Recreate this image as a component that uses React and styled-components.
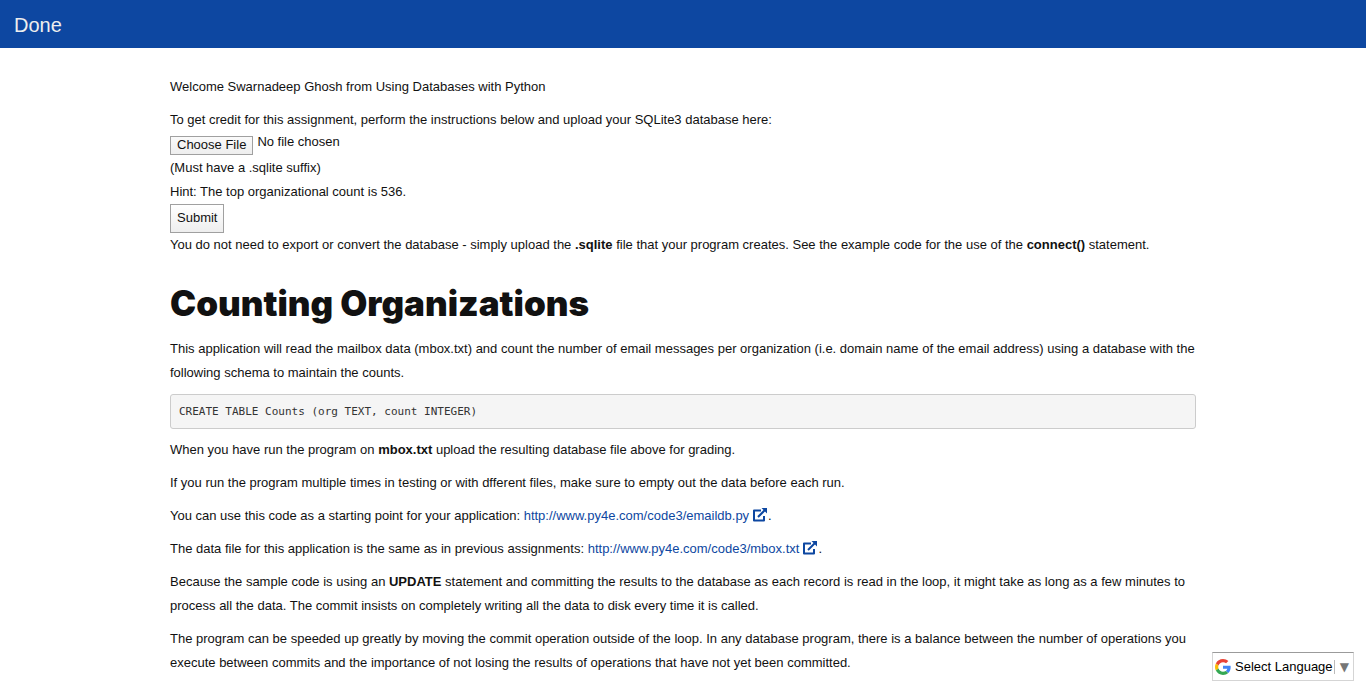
import React from "react";
import styled, { createGlobalStyle } from "styled-components";

const GlobalStyle = createGlobalStyle`
  *, *::before, *::after { box-sizing: border-box; }
  body {
    margin: 0;
    background: #fff;
    color: #111;
    font: 13px/24px "Liberation Sans", Arial, sans-serif;
  }
`;

const TopBar = styled.nav`
  display: flex;
  align-items: center;
  height: 48px;
  padding: 2px 14px 0;
  background: #0d47a1;
`;

const DoneLink = styled.a`
  color: #eee;
  font-size: 20px;
  text-decoration: none;
`;

const Content = styled.main`
  max-width: 1066px;
  margin: 0 auto;
  padding: 27px 20px 0;
`;

const Paragraph = styled.p`
  margin: 0 0 9px;
`;

const Form = styled.form`
  display: flex;
  flex-direction: column;
  align-items: flex-start;
`;

const FileInput = styled.input`
  display: block;
  height: 24px;
  color: inherit;
  font: inherit;
  line-height: 20px;

  &::file-selector-button {
    height: 19px;
    margin: 1px 4px 0 0;
    padding: 0 6px;
    border: 1px solid #a0a0a0;
    border-radius: 0;
    background: linear-gradient(#fafafa, #eee);
    color: #111;
    font: 13px/16px "Liberation Sans", Arial, sans-serif;
    vertical-align: -3px;
  }
`;

const SubmitButton = styled.button`
  height: 29px;
  padding: 0 6px 2px;
  border: 1px solid #a0a0a0;
  background: linear-gradient(#fff, #eee);
  color: #111;
  font: inherit;
`;

const Title = styled.h1`
  margin: 22px 0 10px;
  color: #111;
  font: 900 35px/48px "Arial Black", Inter, sans-serif;
`;

const CodeBlock = styled.pre`
  margin: 0 0 9px;
  padding: 8px;
  border: 1px solid #ccc;
  border-radius: 3px;
  background: #f5f5f5;
  color: #333;
  font: 11px/17px Consolas, "DejaVu Sans Mono", monospace;
`;

const ExternalLink = styled.a`
  color: #0d47a1;
  text-decoration: none;

  svg {
    margin-left: 3px;
    vertical-align: -2px;
  }
`;

const LanguagePicker = styled.label`
  position: fixed;
  right: 12px;
  bottom: 3px;
  display: flex;
  align-items: center;
  width: 142px;
  height: 29px;
  padding: 0 4px 0 2px;
  border: 1px solid #d5d5d5;
  border-top-color: #9b9b9b;
  background: #fff;
`;

const LanguageSelect = styled.select`
  flex: 1;
  min-width: 0;
  height: 24px;
  margin-left: 4px;
  padding: 0;
  border: 0;
  appearance: none;
  background: transparent;
  color: #000;
  font: inherit;
`;

const Arrow = styled.span`
  padding-left: 5px;
  border-left: 1px solid #bbb;
  color: #767676;
  font: 12px/14px "DejaVu Sans", sans-serif;
`;

function ExternalIcon() {
  return (
    <svg width="16" height="14" viewBox="0 0 16 14" fill="none" stroke="#0d47a1" aria-hidden="true">
      <path d="M9 2.500H2V12.500H12V8" strokeWidth="2" strokeLinejoin="round" />
      <path d="M6 9l7-7" strokeWidth="2" />
      <path d="M9.500 0H15v5.500z" fill="#0d47a1" stroke="none" />
    </svg>
  );
}

function GoogleIcon() {
  return (
    <svg width="16" height="16" viewBox="0 0 48 48" aria-hidden="true">
      <path fill="#EA4335" d="M24 9.500c3.540 0 6.710 1.220 9.210 3.600l6.850-6.850C35.900 2.380 30.470 0 24 0 14.620 0 6.510 5.380 2.560 13.220l7.980 6.190C12.430 13.720 17.740 9.500 24 9.500z" />
      <path fill="#4285F4" d="M46.980 24.550c0-1.570-.15-3.090-.38-4.550H24v9.020h12.940c-.58 2.960-2.260 5.480-4.780 7.180l7.730 6c4.510-4.180 7.090-10.360 7.090-17.650z" />
      <path fill="#FBBC05" d="M10.530 28.590c-.48-1.450-.76-2.990-.76-4.590s.27-3.140.76-4.590l-7.980-6.190C.92 16.460 0 20.120 0 24c0 3.880.92 7.540 2.560 10.780l7.970-6.190z" />
      <path fill="#34A853" d="M24 48c6.480 0 11.930-2.130 15.890-5.810l-7.730-6c-2.150 1.450-4.920 2.300-8.160 2.300-6.260 0-11.570-4.220-13.470-9.910l-7.980 6.190C6.510 42.620 14.620 48 24 48z" />
    </svg>
  );
}

export default function App() {
  return (
    <>
      <GlobalStyle />
      <TopBar>
        <DoneLink href="#done">Done</DoneLink>
      </TopBar>
      <Content>
        <Paragraph>Welcome Swarnadeep Ghosh from Using Databases with Python</Paragraph>
        <Form onSubmit={(event) => event.preventDefault()}>
          <label htmlFor="database">
            To get credit for this assignment, perform the instructions below and upload your SQLite3 database here:
          </label>
          <FileInput id="database" type="file" name="database" />
          <span>(Must have a .sqlite suffix)</span>
          <span>Hint: The top organizational count is 536.</span>
          <SubmitButton type="submit">Submit</SubmitButton>
        </Form>
        <Paragraph>
          You do not need to export or convert the database - simply upload the <b>.sqlite</b> file that your program
          creates. See the example code for the use of the <b>connect()</b> statement.
        </Paragraph>
        <Title>Counting Organizations</Title>
        <Paragraph>
          This application will read the mailbox data (mbox.txt) and count the number of email messages per
          organization (i.e. domain name of the email address) using a database with the following schema to maintain
          the counts.
        </Paragraph>
        <CodeBlock>CREATE TABLE Counts (org TEXT, count INTEGER)</CodeBlock>
        <Paragraph>
          When you have run the program on <b>mbox.txt</b> upload the resulting database file above for grading.
        </Paragraph>
        <Paragraph>
          If you run the program multiple times in testing or with dfferent files, make sure to empty out the data
          before each run.
        </Paragraph>
        <Paragraph>
          You can use this code as a starting point for your application:{" "}
          <ExternalLink href="#emaildb">
            http://www.py4e.com/code3/emaildb.py
            <ExternalIcon />
          </ExternalLink>
          .
        </Paragraph>
        <Paragraph>
          The data file for this application is the same as in previous assignments:{" "}
          <ExternalLink href="#mbox">
            http://www.py4e.com/code3/mbox.txt
            <ExternalIcon />
          </ExternalLink>
          .
        </Paragraph>
        <Paragraph>
          Because the sample code is using an <b>UPDATE</b> statement and committing the results to the database as
          each record is read in the loop, it might take as long as a few minutes to process all the data. The commit
          insists on completely writing all the data to disk every time it is called.
        </Paragraph>
        <Paragraph>
          The program can be speeded up greatly by moving the commit operation outside of the loop. In any database
          program, there is a balance between the number of operations you execute between commits and the importance
          of not losing the results of operations that have not yet been committed.
        </Paragraph>
      </Content>
      <LanguagePicker>
        <GoogleIcon />
        <LanguageSelect aria-label="Select Language" defaultValue="">
          <option value="">Select Language</option>
        </LanguageSelect>
        <Arrow aria-hidden="true">▼</Arrow>
      </LanguagePicker>
    </>
  );
}
